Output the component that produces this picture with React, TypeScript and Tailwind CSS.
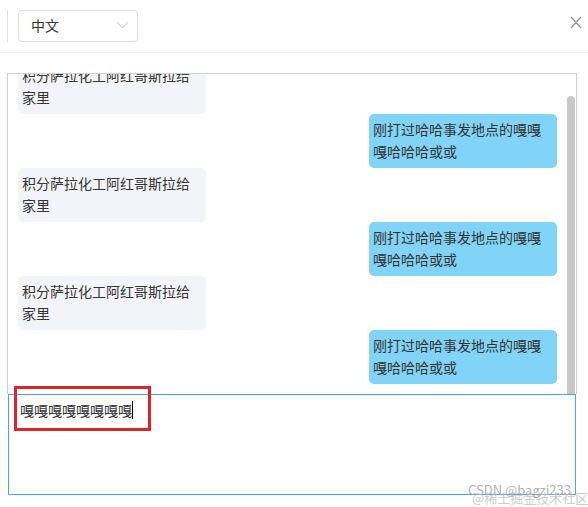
import React from "react";

const font = { fontFamily: '"Microsoft YaHei", "Noto Sans CJK SC", "Noto Sans", sans-serif' };

const LEFT = "积分萨拉化工阿红哥斯拉给家里";
const RIGHT = "刚打过哈哈事发地点的嘎嘎嘎哈哈哈或或";

function Bubble({ side, text }: { side: "l" | "r"; text: string }) {
  return (
    <div className={side === "l" ? "flex justify-start" : "flex justify-end"}>
      <div
        className={
          side === "l"
            ? "w-[188px] h-[54px] pl-[4px] pr-[5px] pt-[4px] pb-[6px] rounded-[5px] bg-[#f3f4f9] text-[14px] leading-[22px] text-[#333]"
            : "w-[188px] h-[54px] pl-[4px] pr-[5px] pt-[4px] pb-[6px] rounded-[5px] bg-[#81d3f8] text-[14px] leading-[22px] text-[#333]"
        }
      >
        {text}
      </div>
    </div>
  );
}

export default function App() {
  return (
    <div className="relative w-[588px] h-[507px] bg-white overflow-hidden" style={font}>
      {/* header */}
      <div className="h-[53px] border-b border-[#ebeef5] flex items-start pt-[10px]">
        <div className="ml-[7px] w-px h-[32px] bg-[#dcdfe6]" />
        <div className="ml-[10px] w-[120px] h-[32px] border border-[#dcdfe6] rounded-[4px] flex items-center justify-between pl-[12px] pr-[8px] pb-[2px]">
          <span className="text-[14px] text-[#333]">中文</span>
          <svg width="13" height="8" viewBox="0 0 13 8" fill="none">
            <path d="M1 1l5.5 6L12 1" stroke="#c0c4cc" strokeWidth="1" />
          </svg>
        </div>
        <div className="flex-1" />
        <svg className="mt-[6px] mr-[6px]" width="12" height="13" viewBox="0 0 12 13" fill="none">
          <path d="M1 1l10 11M11 1L1 12" stroke="#909399" strokeWidth="1.2" />
        </svg>
      </div>

      {/* chat box */}
      <div className="mt-[20px] ml-[7px] w-[570px] h-[321px] border-t border-l border-r border-[#cfcfcf] flex overflow-hidden">
        <div className="flex-1 overflow-hidden pl-[10px] pr-[10px]">
          <div className="mt-[-14px] flex flex-col">
            <Bubble side="l" text={LEFT} />
            <Bubble side="r" text={RIGHT} />
            <Bubble side="l" text={LEFT} />
            <Bubble side="r" text={RIGHT} />
            <Bubble side="l" text={LEFT} />
            <Bubble side="r" text={RIGHT} />
          </div>
        </div>
        <div className="w-[8px] pt-[22px] mr-px">
          <div className="h-full bg-[#c8c8c8] rounded-t-[4px]" />
        </div>
      </div>

      {/* textarea */}
      <div className="ml-[8px] w-[568px] h-[101px] border border-[#4aa3ee] pl-[11px] pr-[12px] pt-[4px]">
        <div className="flex items-center text-[14px] leading-[22px] text-[#333]">
          <span>嘎嘎嘎嘎嘎嘎嘎嘎</span>
          <span className="w-px h-[18px] bg-black" />
        </div>
      </div>

      {/* red highlight */}
      <div className="absolute left-[14px] top-[386px] w-[137px] h-[45px] border-[3px] border-[#d9262c]" />

      {/* watermark */}
      <div className="absolute left-[468px] top-[483px] text-[13px] leading-[14px] text-[#a0a0a0] opacity-80 whitespace-nowrap">
        CSDN @bagzi233
      </div>
      <div className="absolute left-[472px] top-[491px] text-[13px] leading-[14px] text-[#b8b8b8] opacity-70 whitespace-nowrap">
        @稀土掘金技术社区
      </div>
    </div>
  );
}
